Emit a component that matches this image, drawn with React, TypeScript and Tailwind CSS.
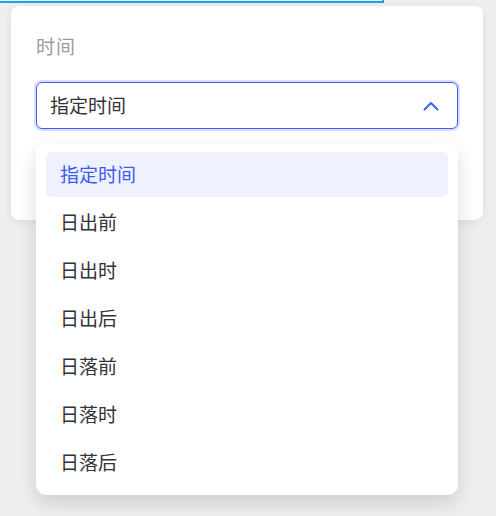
import React from "react";

const options = ["指定时间", "日出前", "日出时", "日出后", "日落前", "日落时", "日落后"];

export default function App() {
    const selected = "指定时间";
    return (
        <div
            className="relative w-[496px] h-[516px] bg-[#efefef] overflow-hidden"
            style={{ fontFamily: '"Noto Sans CJK SC", "Noto Sans", sans-serif' }}
        >
            <div className="h-[3px] w-[384px] border-b-2 border-r-2 border-[#1aa3f0] bg-[#f4f8fb]" />
            <div className="ml-[11px] mt-[3px] w-[472px] h-[214px] rounded-lg bg-white shadow-[0_2px_10px_rgba(0,0,0,0.08)] px-[25px] pt-[28px]">
                <div className="text-[19px] leading-[24px] tracking-[1px] text-[#9c9c9c]">时间</div>
                <div className="mt-[24px] h-[47px] rounded-md border border-[#3f5ef5] ring-2 ring-[#d9defd] flex items-center justify-between pl-[13px] pr-[18px]">
                    <span className="text-[19px] text-[#333333]">指定时间</span>
                    <svg width="16" height="10" viewBox="0 0 16 10" fill="none">
                        <path d="M1.5 8.5L8 2L14.5 8.5" stroke="#3f5ef5" strokeWidth="2" strokeLinecap="round" strokeLinejoin="round" />
                    </svg>
                </div>
            </div>
            <div className="absolute left-[36px] top-[143px] w-[422px] rounded-[10px] bg-white shadow-[0_8px_20px_rgba(0,0,0,0.14)] pt-[9px] pb-[10px] px-[10px] flex flex-col gap-[3px]">
                {options.map((o) => (
                    <div
                        key={o}
                        className={
                            o === selected
                                ? "h-[45px] rounded-md bg-[#f0f1fe] flex items-center pl-[14px] text-[19px] text-[#3d5af5]"
                                : "h-[45px] rounded-md flex items-center pl-[14px] text-[19px] text-[#333333]"
                        }
                    >
                        {o}
                    </div>
                ))}
            </div>
        </div>
    );
}
